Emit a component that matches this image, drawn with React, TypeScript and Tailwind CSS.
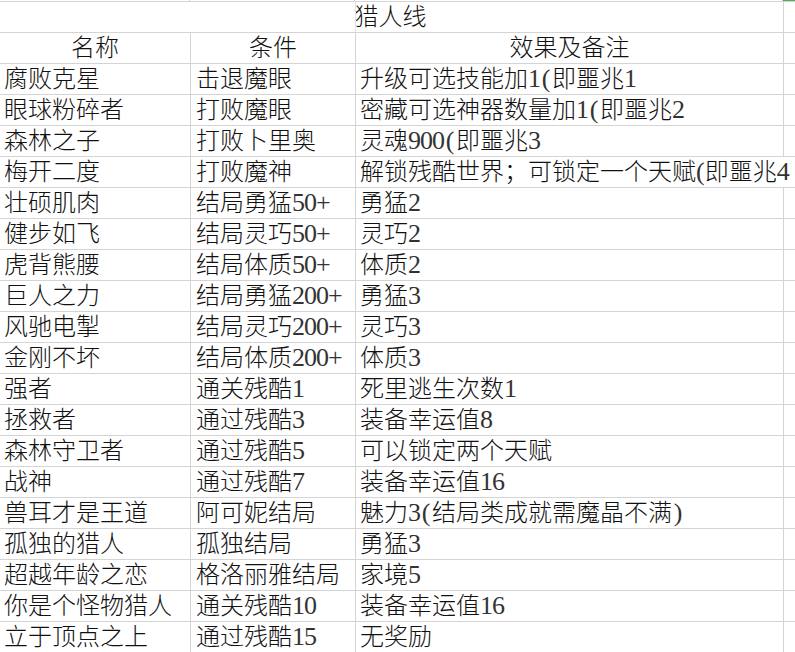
import React from 'react'

const rows: [string, string, string][] = [
  ['腐败克星', '击退魔眼', '升级可选技能加1(即噩兆1'],
  ['眼球粉碎者', '打败魔眼', '密藏可选神器数量加1(即噩兆2'],
  ['森林之子', '打败卜里奥', '灵魂900(即噩兆3'],
  ['梅开二度', '打败魔神', '解锁残酷世界；可锁定一个天赋(即噩兆4'],
  ['壮硕肌肉', '结局勇猛50+', '勇猛2'],
  ['健步如飞', '结局灵巧50+', '灵巧2'],
  ['虎背熊腰', '结局体质50+', '体质2'],
  ['巨人之力', '结局勇猛200+', '勇猛3'],
  ['风驰电掣', '结局灵巧200+', '灵巧3'],
  ['金刚不坏', '结局体质200+', '体质3'],
  ['强者', '通关残酷1', '死里逃生次数1'],
  ['拯救者', '通过残酷3', '装备幸运值8'],
  ['森林守卫者', '通过残酷5', '可以锁定两个天赋'],
  ['战神', '通过残酷7', '装备幸运值16'],
  ['兽耳才是王道', '阿可妮结局', '魅力3(结局类成就需魔晶不满)'],
  ['孤独的猎人', '孤独结局', '勇猛3'],
  ['超越年龄之恋', '格洛丽雅结局', '家境5'],
  ['你是个怪物猎人', '通关残酷10', '装备幸运值16'],
  ['立于顶点之上', '通过残酷15', '无奖励'],
]

// latin bits: a touch taller than Liberation Serif at 24px, kept at half-width
function Cell({ text }: { text: string }) {
  const parts = text.split(/([0-9+]+|[()])/)
  return (
    <>
      {parts.map((p, i) => {
        if (p === '(' || p === ')')
          return (
            <span key={i} className="inline-block w-[12px] text-center text-[26px] text-[#333]">
              {p}
            </span>
          )
        if (/^[0-9+]+$/.test(p))
          return (
            <span key={i} className="text-[26px] tracking-[-1px] text-[#333]">
              {p}
            </span>
          )
        return <span key={i}>{p}</span>
      })}
    </>
  )
}

export default function App() {
  return (
    <div
      className="w-[795px] h-[652px] overflow-hidden bg-white text-[24px] leading-none text-[#111] font-light"
      style={{ fontFamily: "'Liberation Serif', 'Noto Sans CJK SC', serif" }}
    >
      {/* row above the sheet */}
      <div className="flex h-[1px]">
        <div className="w-[190px] border-r border-[#d4d4d4]" />
        <div className="w-[165px] border-r border-[#d4d4d4]" />
        <div className="w-[428px] border-r border-[#d4d4d4]" />
        <div className="flex-1 bg-[#4caf50]" />
      </div>
      <div className="border-t border-[#d4d4d4]">
        {/* title (merged) */}
        <div className="flex h-[31px] border-b border-[#d4d4d4]">
          <div className="relative w-[784px] border-r border-[#d4d4d4] flex items-center justify-center">
            <div className="absolute left-[355px] top-0 bottom-0 w-px bg-[#e2e2e2]" />
            <span className="pr-[2px]">猎人线</span>
          </div>
          <div className="flex-1" />
        </div>

        {/* header */}
        <div className="flex h-[31px] border-b border-[#d4d4d4]">
          <div className="w-[191px] shrink-0 border-r border-[#d4d4d4] flex items-center justify-center">名称</div>
          <div className="w-[165px] shrink-0 border-r border-[#d4d4d4] flex items-center justify-center">条件</div>
          <div className="w-[428px] shrink-0 border-r border-[#d4d4d4] flex items-center justify-center">效果及备注</div>
          <div className="flex-1" />
        </div>

        {rows.map(([name, cond, effect], i) => {
          const overflow = i === 3
          return (
            <div key={i} className="flex h-[31px] border-b border-[#d4d4d4]">
              <div className="w-[191px] shrink-0 border-r border-[#d4d4d4] flex items-center pl-[4px] whitespace-nowrap">
                <Cell text={name} />
              </div>
              <div className="w-[165px] shrink-0 border-r border-[#d4d4d4] flex items-center pl-[5px] whitespace-nowrap">
                <Cell text={cond} />
              </div>
              <div
                className={
                  overflow
                    ? 'relative z-10 w-[428px] shrink-0 flex items-center pl-[4px] whitespace-nowrap'
                    : 'w-[428px] shrink-0 border-r border-[#d4d4d4] flex items-center pl-[4px] whitespace-nowrap'
                }
              >
                <Cell text={effect} />
              </div>
              <div className={overflow ? 'flex-1 border-l border-transparent' : 'flex-1'} />
            </div>
          )
        })}
      </div>
    </div>
  )
}
